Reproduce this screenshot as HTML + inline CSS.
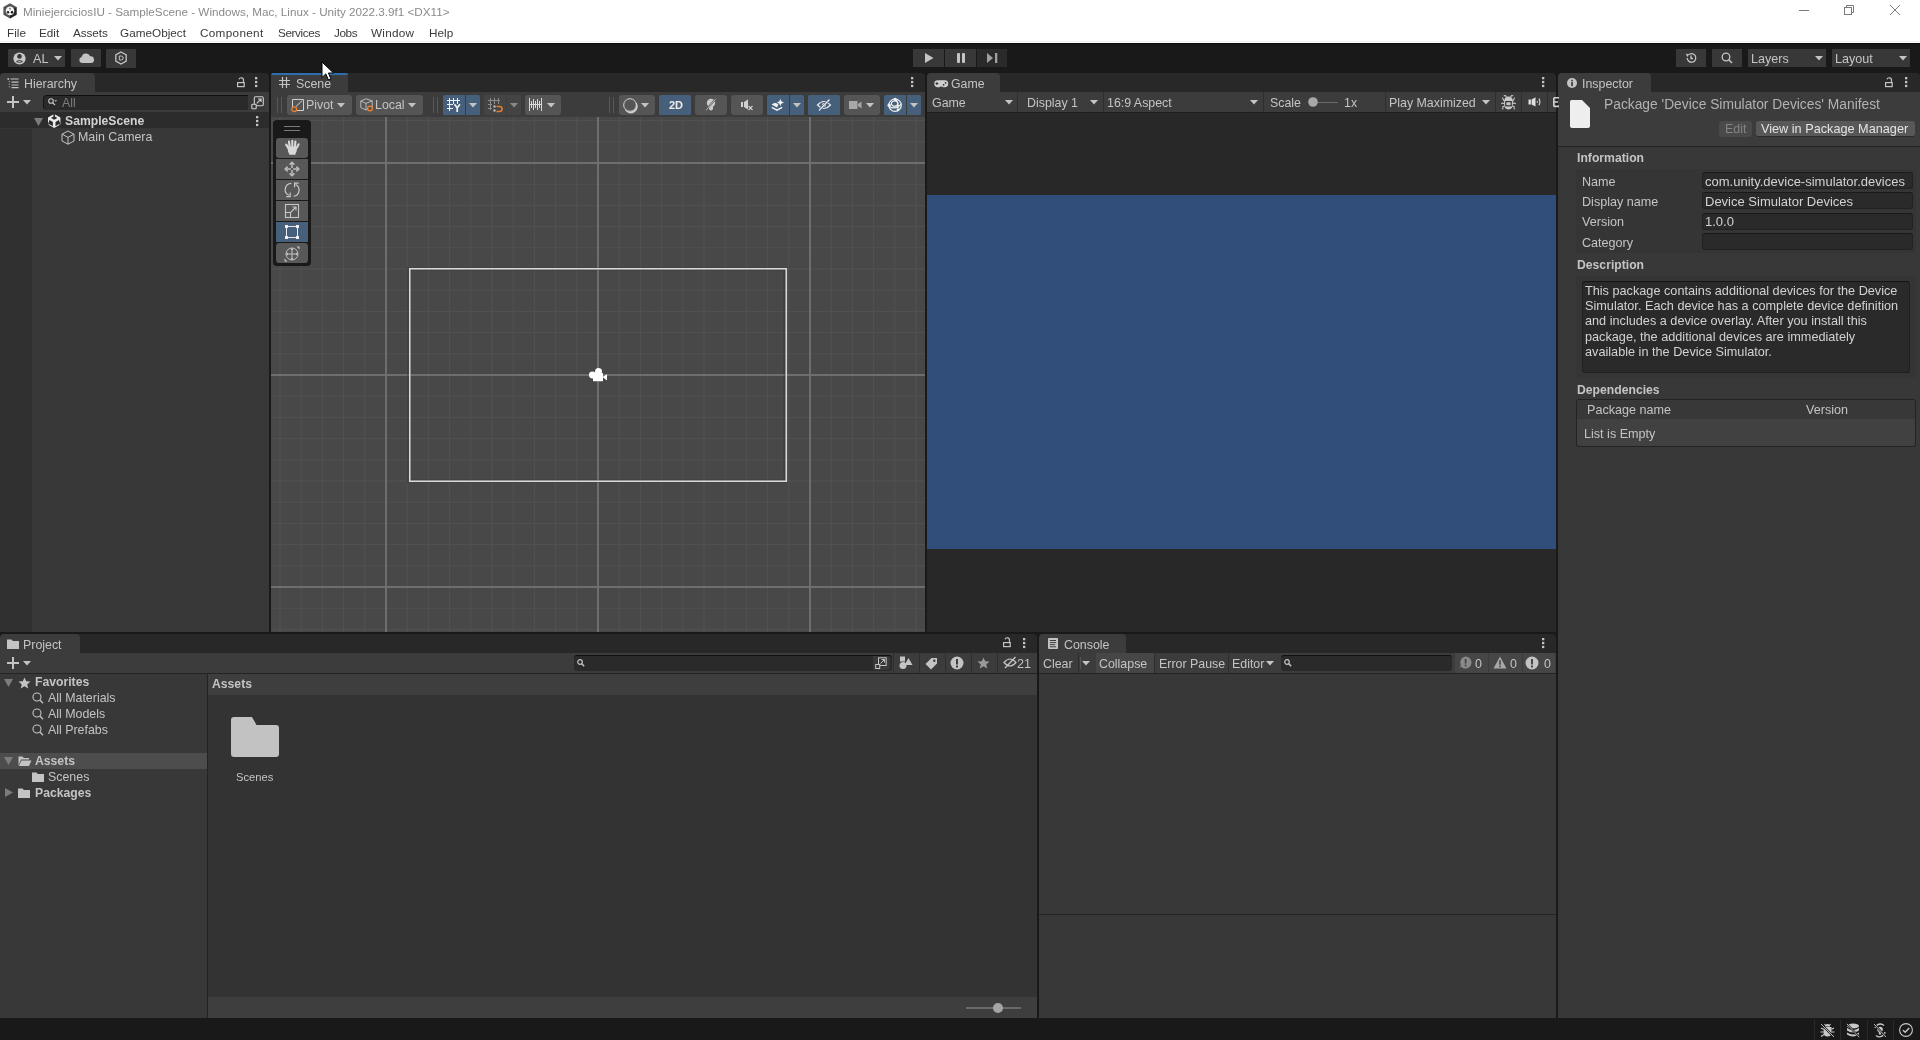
<!DOCTYPE html><html><head><meta charset="utf-8"><style>
*{box-sizing:border-box;margin:0;padding:0}
html,body{width:1920px;height:1040px;overflow:hidden;background:#191919;font-family:"Liberation Sans",sans-serif;font-size:12px;color:#c4c4c4}
.a{position:absolute}
.t{position:absolute;white-space:nowrap;line-height:16px;height:16px;will-change:transform}
svg{position:absolute;overflow:visible}
</style></head><body>
<div class="a" style="left:0px;top:0px;width:1920px;height:43px;background:#ffffff;"></div>
<div class="a" style="left:0px;top:41px;width:1920px;height:1px;background:#efefef;"></div>
<div class="a" style="left:0px;top:43px;width:1920px;height:1px;background:#0a0a0a;"></div>
<svg style="left:3px;top:3px;" width="15" height="16" viewBox="0 0 15 16"><path d="M7 0.3 L13.6 4 V11.8 L7 15.5 L0.4 11.8 V4Z" fill="#555555"/><path d="M7 15.5 L13.6 11.8 V4 L7 7.8Z" fill="#111111" opacity="0.7"/><circle cx="7" cy="7.9" r="4.3" fill="#f4f4f4"/><circle cx="7" cy="5.7" r="1" fill="#888888"/><circle cx="5" cy="9.2" r="1.2" fill="#222222"/><circle cx="9" cy="9.2" r="1.2" fill="#111111"/></svg>
<div class="t" style="left:23px;top:4.13px;font-size:11.7px;color:#8a8a8a;">MiniejerciciosIU - SampleScene - Windows, Mac, Linux - Unity 2022.3.9f1 &lt;DX11&gt;</div>
<div class="t" style="left:7px;top:25.12px;font-size:11.75px;color:#3a3a3a;letter-spacing:0px">File</div>
<div class="t" style="left:39px;top:25.12px;font-size:11.75px;color:#3a3a3a;letter-spacing:0px">Edit</div>
<div class="t" style="left:73px;top:25.12px;font-size:11.75px;color:#3a3a3a;letter-spacing:-0.1px">Assets</div>
<div class="t" style="left:120px;top:25.12px;font-size:11.75px;color:#3a3a3a;letter-spacing:0px">GameObject</div>
<div class="t" style="left:200px;top:25.12px;font-size:11.75px;color:#3a3a3a;letter-spacing:0.3px">Component</div>
<div class="t" style="left:278px;top:25.12px;font-size:11.75px;color:#3a3a3a;letter-spacing:-0.4px">Services</div>
<div class="t" style="left:334px;top:25.12px;font-size:11.75px;color:#3a3a3a;letter-spacing:-0.4px">Jobs</div>
<div class="t" style="left:371px;top:25.12px;font-size:11.75px;color:#3a3a3a;letter-spacing:0.25px">Window</div>
<div class="t" style="left:429px;top:25.12px;font-size:11.75px;color:#3a3a3a;letter-spacing:0px">Help</div>
<svg style="left:1799px;top:10px;" width="11" height="1" viewBox="0 0 11 1"><rect x="0" y="0" width="10" height="1" fill="#7a7a7a"/></svg>
<svg style="left:1843px;top:4px;" width="12" height="12" viewBox="0 0 12 12"><rect x="1.5" y="3.5" width="7" height="7" fill="none" stroke="#7a7a7a"/><path d="M3.5 3.5 V1.5 H10.5 V8.5 H8.5" fill="none" stroke="#7a7a7a"/></svg>
<svg style="left:1889px;top:4px;" width="12" height="12" viewBox="0 0 12 12"><path d="M1 1 L11 11 M11 1 L1 11" stroke="#7a7a7a" stroke-width="1"/></svg>
<div class="a" style="left:0px;top:44px;width:1920px;height:29px;background:#191919;"></div>
<div class="a" style="left:8px;top:49px;width:57px;height:18px;background:#383838;border-radius:1px"></div>
<svg style="left:12.5px;top:51.5px;" width="13" height="13" viewBox="0 0 13 13"><circle cx="6.5" cy="6.5" r="6.1" fill="#c8c8c8"/><circle cx="6.5" cy="4.4" r="2.3" fill="#383838"/><path d="M2.8 9.6 Q6.5 6.6 10.2 9.6 Q6.5 12 2.8 9.6Z" fill="#383838"/><path d="M4.3 9.4 Q6.5 8.2 8.7 9.4 Q6.5 10.3 4.3 9.4Z" fill="#c8c8c8"/></svg>
<div class="t" style="left:33px;top:50.84px;font-size:12.6px;color:#c4c4c4;">AL</div>
<svg style="left:54px;top:56px;" width="8" height="5.5" viewBox="0 0 8 5.5"><path d="M0 0 L8 0 L4.0 4.5Z" fill="#c4c4c4"/></svg>
<div class="a" style="left:71px;top:49px;width:30px;height:18px;background:#383838;border-radius:1px"></div>
<svg style="left:79px;top:52.5px;" width="15" height="10.5" viewBox="0 0 15 10.5"><path d="M3 10 A3 3 0 0 1 2.6 4.1 A4.5 4.5 0 0 1 11.2 3.2 A3.4 3.4 0 0 1 12 10Z" fill="#c4c4c4"/></svg>
<div class="a" style="left:106px;top:49px;width:30px;height:19px;background:#383838;border-radius:1px"></div>
<svg style="left:114px;top:51px;" width="14" height="14" viewBox="0 0 14 14"><path d="M7 1 L12.2 4 L12.2 10 L7 13 L1.8 10 L1.8 4Z" fill="none" stroke="#c4c4c4" stroke-width="1.3"/><path d="M5.3 5 H7.2 A2 2 0 0 1 7.2 9 H5.3Z" fill="none" stroke="#c4c4c4" stroke-width="1"/></svg>
<div class="a" style="left:913px;top:49px;width:31px;height:18px;background:#383838;"></div>
<svg style="left:925px;top:53px;" width="9" height="10" viewBox="0 0 9 10"><path d="M0 0 L8.5 5 L0 10Z" fill="#c4c4c4"/></svg>
<div class="a" style="left:945px;top:49px;width:31px;height:18px;background:#383838;"></div>
<svg style="left:957px;top:53px;" width="9" height="10" viewBox="0 0 9 10"><rect x="0" y="0" width="3" height="10" rx="1" fill="#c4c4c4"/><rect x="5" y="0" width="3" height="10" rx="1" fill="#c4c4c4"/></svg>
<div class="a" style="left:977px;top:49px;width:30px;height:18px;background:#2a2a2a;"></div>
<svg style="left:987px;top:53px;" width="11" height="10" viewBox="0 0 11 10"><path d="M0 0 L6 5 L0 10Z" fill="#a0a0a0"/><rect x="8" y="0" width="2.3" height="10" fill="#a0a0a0"/></svg>
<div class="a" style="left:1676px;top:49px;width:30px;height:18px;background:#383838;"></div>
<svg style="left:1685px;top:52px;" width="12" height="12" viewBox="0 0 12 12"><path d="M2.2 6 A4.3 4.3 0 1 0 3.4 2.9" fill="none" stroke="#c4c4c4" stroke-width="1.3"/><path d="M0.8 1.5 L3.8 2.6 L2.2 5.2Z" fill="#c4c4c4"/><path d="M6 3.5 V6.5 H8" fill="none" stroke="#c4c4c4" stroke-width="1.3"/></svg>
<div class="a" style="left:1712px;top:49px;width:30px;height:18px;background:#383838;"></div>
<svg style="left:1721px;top:52px;" width="12" height="12" viewBox="0 0 12 12"><circle cx="5" cy="5" r="3.8" fill="none" stroke="#c4c4c4" stroke-width="1.3"/><path d="M7.8 7.8 L11 11" stroke="#c4c4c4" stroke-width="1.6"/></svg>
<div class="a" style="left:1748px;top:49px;width:78px;height:18px;background:#383838;"></div>
<div class="t" style="left:1751px;top:50.84px;font-size:12.6px;color:#c4c4c4;">Layers</div>
<svg style="left:1815px;top:56px;" width="8" height="5.5" viewBox="0 0 8 5.5"><path d="M0 0 L8 0 L4.0 4.5Z" fill="#c4c4c4"/></svg>
<div class="a" style="left:1832px;top:49px;width:78px;height:18px;background:#383838;"></div>
<div class="t" style="left:1835px;top:50.84px;font-size:12.6px;color:#c4c4c4;">Layout</div>
<svg style="left:1899px;top:56px;" width="8" height="5.5" viewBox="0 0 8 5.5"><path d="M0 0 L8 0 L4.0 4.5Z" fill="#c4c4c4"/></svg>
<div class="a" style="left:0px;top:73px;width:269px;height:19px;background:#282828;border-radius:4px 4px 0 0"></div>
<div class="a" style="left:0px;top:73px;width:95px;height:19px;background:#3c3c3c;border-radius:4px 4px 0 0"></div>
<div class="a" style="left:0px;top:92px;width:269px;height:20px;background:#3c3c3c;"></div>
<div class="a" style="left:0px;top:112px;width:269px;height:520px;background:#383838;"></div>
<div class="a" style="left:271px;top:73px;width:654px;height:19px;background:#282828;border-radius:4px 4px 0 0"></div>
<div class="a" style="left:271px;top:73px;width:77px;height:19px;background:#3c3c3c;border-radius:4px 4px 0 0"></div>
<div class="a" style="left:271px;top:73px;width:77px;height:2px;background:#2f6eae;border-radius:3px 3px 0 0"></div>
<div class="a" style="left:271px;top:92px;width:654px;height:25px;background:#3c3c3c;"></div>
<div class="a" style="left:271px;top:117px;width:654px;height:515px;background:#484848;"></div>
<div class="a" style="left:927px;top:73px;width:629px;height:19px;background:#282828;border-radius:4px 4px 0 0"></div>
<div class="a" style="left:927px;top:73px;width:73px;height:19px;background:#3c3c3c;border-radius:4px 4px 0 0"></div>
<div class="a" style="left:927px;top:92px;width:629px;height:20px;background:#3c3c3c;"></div>
<div class="a" style="left:927px;top:112px;width:629px;height:1px;background:#1e1e1e;"></div>
<div class="a" style="left:927px;top:113px;width:629px;height:519px;background:#282828;"></div>
<div class="a" style="left:927px;top:195px;width:629px;height:354px;background:#314d79;"></div>
<div class="a" style="left:1558px;top:73px;width:362px;height:19px;background:#282828;border-radius:4px 4px 0 0"></div>
<div class="a" style="left:1558px;top:73px;width:93px;height:19px;background:#3c3c3c;border-radius:4px 4px 0 0"></div>
<div class="a" style="left:1558px;top:92px;width:362px;height:54px;background:#3c3c3c;"></div>
<div class="a" style="left:1558px;top:146px;width:362px;height:1px;background:#232323;"></div>
<div class="a" style="left:1558px;top:147px;width:362px;height:871px;background:#383838;"></div>
<div class="a" style="left:0px;top:634px;width:1037px;height:19px;background:#282828;border-radius:4px 4px 0 0"></div>
<div class="a" style="left:0px;top:634px;width:80px;height:19px;background:#3c3c3c;border-radius:4px 4px 0 0"></div>
<div class="a" style="left:0px;top:653px;width:1037px;height:20px;background:#3c3c3c;"></div>
<div class="a" style="left:0px;top:673px;width:1037px;height:1px;background:#232323;"></div>
<div class="a" style="left:0px;top:674px;width:207px;height:344px;background:#383838;"></div>
<div class="a" style="left:207px;top:674px;width:1px;height:344px;background:#232323;"></div>
<div class="a" style="left:208px;top:674px;width:829px;height:21px;background:#3e3e3e;"></div>
<div class="a" style="left:208px;top:695px;width:829px;height:302px;background:#333333;"></div>
<div class="a" style="left:208px;top:997px;width:829px;height:21px;background:#3e3e3e;"></div>
<div class="a" style="left:1039px;top:634px;width:517px;height:19px;background:#282828;border-radius:4px 4px 0 0"></div>
<div class="a" style="left:1039px;top:634px;width:87px;height:19px;background:#3c3c3c;border-radius:4px 4px 0 0"></div>
<div class="a" style="left:1039px;top:653px;width:517px;height:20px;background:#3c3c3c;"></div>
<div class="a" style="left:1039px;top:673px;width:517px;height:1px;background:#232323;"></div>
<div class="a" style="left:1039px;top:674px;width:517px;height:344px;background:#383838;"></div>
<div class="a" style="left:1039px;top:914px;width:517px;height:1px;background:#232323;"></div>
<div class="a" style="left:0px;top:1018px;width:1920px;height:22px;background:#191919;"></div>
<svg style="left:7px;top:78px;" width="12" height="10" viewBox="0 0 12 10"><path d="M3.5 1 H11.5 M4.5 4.2 H11.5 M4.5 7 H11.5 M4.5 9.6 H11.5" stroke="#c4c4c4" stroke-width="1.2"/><circle cx="1.2" cy="1" r="0.9" fill="#c4c4c4"/><path d="M2.3 3 V9.6" stroke="#c4c4c4" stroke-width="0.8" stroke-dasharray="1.2 1.4"/></svg>
<div class="t" style="left:23.7px;top:75.90px;font-size:12.4px;color:#c4c4c4;">Hierarchy</div>
<svg style="left:236px;top:78px;" width="10" height="10" viewBox="0 0 10 10"><path d="M7.5 4.6 V2.2 A2.3 2.3 0 0 0 3 1.4" fill="none" stroke="#c4c4c4" stroke-width="1.2"/><rect x="1.6" y="4.6" width="6.6" height="4" fill="none" stroke="#c4c4c4" stroke-width="1.2"/></svg>
<svg style="left:255px;top:77px;" width="3" height="12" viewBox="0 0 3 12"><rect x="0" y="0" width="2.3" height="2.3" fill="#c4c4c4"/><rect x="0" y="3.9" width="2.3" height="2.3" fill="#c4c4c4"/><rect x="0" y="7.8" width="2.3" height="2.3" fill="#c4c4c4"/></svg>
<svg style="left:279px;top:77px;" width="11" height="11" viewBox="0 0 11 11"><path d="M3.5 0 V11 M7.5 0 V11 M0 3.5 H11 M0 7.5 H11" stroke="#c4c4c4" stroke-width="1.2"/></svg>
<div class="t" style="left:295.7px;top:75.90px;font-size:12.4px;color:#c4c4c4;">Scene</div>
<svg style="left:911px;top:77px;" width="3" height="12" viewBox="0 0 3 12"><rect x="0" y="0" width="2.3" height="2.3" fill="#c4c4c4"/><rect x="0" y="3.9" width="2.3" height="2.3" fill="#c4c4c4"/><rect x="0" y="7.8" width="2.3" height="2.3" fill="#c4c4c4"/></svg>
<svg style="left:933.8px;top:79.8px;" width="15" height="8" viewBox="0 0 15 8"><rect x="0.3" y="0.3" width="13.9" height="6.9" rx="3.45" fill="#cfcfcf"/><ellipse cx="7.2" cy="7.4" rx="1.8" ry="0.9" fill="#3c3c3c"/><path d="M2.9 2.2 V5 M1.5 3.6 H4.3" stroke="#2a2a2a" stroke-width="1"/><circle cx="9.6" cy="4.8" r="0.85" fill="#2a2a2a"/><circle cx="11.6" cy="2.8" r="0.85" fill="#2a2a2a"/></svg>
<div class="t" style="left:950.8px;top:75.93px;font-size:12.3px;color:#c4c4c4;">Game</div>
<svg style="left:1542px;top:77px;" width="3" height="12" viewBox="0 0 3 12"><rect x="0" y="0" width="2.3" height="2.3" fill="#c4c4c4"/><rect x="0" y="3.9" width="2.3" height="2.3" fill="#c4c4c4"/><rect x="0" y="7.8" width="2.3" height="2.3" fill="#c4c4c4"/></svg>
<svg style="left:1567px;top:78px;" width="10" height="10" viewBox="0 0 10 10"><circle cx="5" cy="5" r="5" fill="#c4c4c4"/><rect x="4.2" y="4" width="1.7" height="4.2" fill="#3c3c3c"/><rect x="4.2" y="1.8" width="1.7" height="1.5" fill="#3c3c3c"/></svg>
<div class="t" style="left:1582.3px;top:75.90px;font-size:12.4px;color:#c4c4c4;">Inspector</div>
<svg style="left:1884px;top:78px;" width="10" height="10" viewBox="0 0 10 10"><path d="M7.5 4.6 V2.2 A2.3 2.3 0 0 0 3 1.4" fill="none" stroke="#c4c4c4" stroke-width="1.2"/><rect x="1.6" y="4.6" width="6.6" height="4" fill="none" stroke="#c4c4c4" stroke-width="1.2"/></svg>
<svg style="left:1905px;top:77px;" width="3" height="12" viewBox="0 0 3 12"><rect x="0" y="0" width="2.3" height="2.3" fill="#c4c4c4"/><rect x="0" y="3.9" width="2.3" height="2.3" fill="#c4c4c4"/><rect x="0" y="7.8" width="2.3" height="2.3" fill="#c4c4c4"/></svg>
<svg style="left:7px;top:639px;" width="12" height="10" viewBox="0 0 12 10"><path d="M0 0.5 H4.5 L5.8 2 H12 V10 H0Z" fill="#c4c4c4"/></svg>
<div class="t" style="left:23.3px;top:636.90px;font-size:12.4px;color:#c4c4c4;">Project</div>
<svg style="left:1002px;top:638px;" width="10" height="10" viewBox="0 0 10 10"><path d="M7.5 4.6 V2.2 A2.3 2.3 0 0 0 3 1.4" fill="none" stroke="#c4c4c4" stroke-width="1.2"/><rect x="1.6" y="4.6" width="6.6" height="4" fill="none" stroke="#c4c4c4" stroke-width="1.2"/></svg>
<svg style="left:1023px;top:638px;" width="3" height="12" viewBox="0 0 3 12"><rect x="0" y="0" width="2.3" height="2.3" fill="#c4c4c4"/><rect x="0" y="3.9" width="2.3" height="2.3" fill="#c4c4c4"/><rect x="0" y="7.8" width="2.3" height="2.3" fill="#c4c4c4"/></svg>
<svg style="left:1048px;top:638px;" width="10" height="11" viewBox="0 0 10 11"><rect x="0" y="0" width="10" height="11" rx="1" fill="#c4c4c4"/><path d="M1.8 2.5 H8 M1.8 4.6 H8.2 M1.8 6.7 H7.2 M1.8 8.8 H8.2" stroke="#3c3c3c" stroke-width="1"/></svg>
<div class="t" style="left:1063.7px;top:636.90px;font-size:12.4px;color:#c4c4c4;">Console</div>
<svg style="left:1542px;top:638px;" width="3" height="12" viewBox="0 0 3 12"><rect x="0" y="0" width="2.3" height="2.3" fill="#c4c4c4"/><rect x="0" y="3.9" width="2.3" height="2.3" fill="#c4c4c4"/><rect x="0" y="7.8" width="2.3" height="2.3" fill="#c4c4c4"/></svg>
<svg style="left:7px;top:96px;" width="12" height="12" viewBox="0 0 12 12"><path d="M6 0 V12 M0 6 H12" stroke="#c4c4c4" stroke-width="2"/></svg>
<svg style="left:23px;top:100px;" width="8" height="5.5" viewBox="0 0 8 5.5"><path d="M0 0 L8 0 L4.0 4.5Z" fill="#c4c4c4"/></svg>
<div class="a" style="left:43px;top:94.5px;width:205px;height:15px;background:#2a2a2a;border-radius:4px 0 0 4px;border-top:1px solid #0f0f0f;border-left:1px solid #151515"></div>
<div class="a" style="left:248px;top:94.5px;width:17px;height:15px;background:#383838;border-radius:0 4px 4px 0"></div>
<svg style="left:48px;top:98px;" width="11" height="9" viewBox="0 0 11 9"><circle cx="3" cy="3" r="2.3" fill="none" stroke="#c4c4c4" stroke-width="1.1"/><path d="M4.6 4.6 L7 7" stroke="#c4c4c4" stroke-width="1.2"/><path d="M6.2 2.2 H9.2 L7.7 3.8Z" fill="#c4c4c4"/></svg>
<div class="t" style="left:62px;top:94.90px;font-size:12.4px;color:#7d7d7d;">All</div>
<svg style="left:250.5px;top:95.5px;" width="14" height="14" viewBox="0 0 14 14"><rect x="3.3" y="0.8" width="9" height="9" rx="1.2" fill="none" stroke="#d0d0d0" stroke-width="1.1"/><rect x="0.8" y="8.3" width="4.4" height="4.4" rx="0.8" fill="#383838" stroke="#d0d0d0" stroke-width="1.1"/><path d="M5.8 7.3 L10 3.1 M7 3 H10.1 V6.1" fill="none" stroke="#d0d0d0" stroke-width="1.1"/></svg>
<div class="a" style="left:0px;top:112px;width:269px;height:16px;background:#2c2c2c;"></div>
<div class="a" style="left:0px;top:128px;width:269px;height:1px;background:#363636;"></div>
<div class="a" style="left:0px;top:129px;width:32px;height:503px;background:#303030;"></div>
<svg style="left:34px;top:118px;" width="9" height="8" viewBox="0 0 9 8"><path d="M0 0 H9 L4.5 8Z" fill="#7c7c7c"/></svg>
<svg style="left:47.8px;top:113.8px;" width="13" height="15" viewBox="0 0 13 15"><path d="M6.2 0 L12.4 3.5 V10.5 L6.2 14 L0 10.5 V3.5Z" fill="#ececec"/><path d="M6.2 1.9 L9.4 3.9 L6.2 5.7 L3 3.9Z M5.4 -0.5 H7 V2.8 H5.4Z" fill="#2c2c2c"/><path d="M1.5 6.1 L4.9 8.1 V12.3 L1.5 10.3 L0.2 11 V9.6Z" fill="#2c2c2c"/><path d="M10.9 6.1 L7.5 8.1 V12.3 L10.9 10.3 L12.2 11 V9.6Z" fill="#2c2c2c"/></svg>
<div class="t" style="left:65px;top:112.97px;font-size:12.2px;color:#d2d2d2;font-weight:bold;">SampleScene</div>
<svg style="left:256px;top:116px;" width="3" height="12" viewBox="0 0 3 12"><rect x="0" y="0" width="2.3" height="2.3" fill="#c4c4c4"/><rect x="0" y="3.9" width="2.3" height="2.3" fill="#c4c4c4"/><rect x="0" y="7.8" width="2.3" height="2.3" fill="#c4c4c4"/></svg>
<svg style="left:61px;top:129.5px;" width="14" height="15" viewBox="0 0 14 15"><path d="M7 1 L13 4.2 V11 L7 14.2 L1 11 V4.2Z M1 4.2 L7 7.4 L13 4.2 M7 7.4 V14.2" fill="none" stroke="#c4c4c4" stroke-width="1"/></svg>
<div class="t" style="left:78px;top:128.90px;font-size:12.4px;color:#c4c4c4;">Main Camera</div>
<svg style="left:271px;top:117px;" width="654" height="515" viewBox="0 0 654 515"><rect x="8.50" y="0" width="1" height="515" fill="#525252"/><rect x="29.70" y="0" width="1" height="515" fill="#525252"/><rect x="50.90" y="0" width="1" height="515" fill="#525252"/><rect x="72.10" y="0" width="1" height="515" fill="#525252"/><rect x="93.30" y="0" width="1" height="515" fill="#525252"/><rect x="135.70" y="0" width="1" height="515" fill="#525252"/><rect x="156.90" y="0" width="1" height="515" fill="#525252"/><rect x="178.10" y="0" width="1" height="515" fill="#525252"/><rect x="199.30" y="0" width="1" height="515" fill="#525252"/><rect x="220.50" y="0" width="1" height="515" fill="#525252"/><rect x="241.70" y="0" width="1" height="515" fill="#525252"/><rect x="262.90" y="0" width="1" height="515" fill="#525252"/><rect x="284.10" y="0" width="1" height="515" fill="#525252"/><rect x="305.30" y="0" width="1" height="515" fill="#525252"/><rect x="347.70" y="0" width="1" height="515" fill="#525252"/><rect x="368.90" y="0" width="1" height="515" fill="#525252"/><rect x="390.10" y="0" width="1" height="515" fill="#525252"/><rect x="411.30" y="0" width="1" height="515" fill="#525252"/><rect x="432.50" y="0" width="1" height="515" fill="#525252"/><rect x="453.70" y="0" width="1" height="515" fill="#525252"/><rect x="474.90" y="0" width="1" height="515" fill="#525252"/><rect x="496.10" y="0" width="1" height="515" fill="#525252"/><rect x="517.30" y="0" width="1" height="515" fill="#525252"/><rect x="559.70" y="0" width="1" height="515" fill="#525252"/><rect x="580.90" y="0" width="1" height="515" fill="#525252"/><rect x="602.10" y="0" width="1" height="515" fill="#525252"/><rect x="623.30" y="0" width="1" height="515" fill="#525252"/><rect x="644.50" y="0" width="1" height="515" fill="#525252"/><rect x="0" y="3.10" width="654" height="1" fill="#525252"/><rect x="0" y="24.30" width="654" height="1" fill="#525252"/><rect x="0" y="66.70" width="654" height="1" fill="#525252"/><rect x="0" y="87.90" width="654" height="1" fill="#525252"/><rect x="0" y="109.10" width="654" height="1" fill="#525252"/><rect x="0" y="130.30" width="654" height="1" fill="#525252"/><rect x="0" y="151.50" width="654" height="1" fill="#525252"/><rect x="0" y="172.70" width="654" height="1" fill="#525252"/><rect x="0" y="193.90" width="654" height="1" fill="#525252"/><rect x="0" y="215.10" width="654" height="1" fill="#525252"/><rect x="0" y="236.30" width="654" height="1" fill="#525252"/><rect x="0" y="278.70" width="654" height="1" fill="#525252"/><rect x="0" y="299.90" width="654" height="1" fill="#525252"/><rect x="0" y="321.10" width="654" height="1" fill="#525252"/><rect x="0" y="342.30" width="654" height="1" fill="#525252"/><rect x="0" y="363.50" width="654" height="1" fill="#525252"/><rect x="0" y="384.70" width="654" height="1" fill="#525252"/><rect x="0" y="405.90" width="654" height="1" fill="#525252"/><rect x="0" y="427.10" width="654" height="1" fill="#525252"/><rect x="0" y="448.30" width="654" height="1" fill="#525252"/><rect x="0" y="490.70" width="654" height="1" fill="#525252"/><rect x="0" y="511.90" width="654" height="1" fill="#525252"/><rect x="114" y="0" width="2" height="515" fill="#6e6e6e"/><rect x="326" y="0" width="2" height="515" fill="#6e6e6e"/><rect x="538" y="0" width="2" height="515" fill="#6e6e6e"/><rect x="0" y="45" width="654" height="2" fill="#6e6e6e"/><rect x="0" y="257" width="654" height="2" fill="#6e6e6e"/><rect x="0" y="469" width="654" height="2" fill="#6e6e6e"/><rect x="137.75" y="151.75" width="376.5" height="212.5" fill="none" stroke="#2a2a2a" stroke-width="3.5" opacity="0.35"/><rect x="138.75" y="151.75" width="376.5" height="212.5" fill="none" stroke="#d9d9d9" stroke-width="1.6"/></svg>
<svg style="left:588px;top:367px;" width="20" height="16" viewBox="0 0 20 16"><g fill="#ffffff"><circle cx="4.4" cy="8" r="3.4"/><circle cx="10.5" cy="4.4" r="3.5"/><rect x="5" y="6" width="10" height="8.2" rx="0.6"/><path d="M14.5 10 L19 7.2 V13.4Z"/></g></svg>
<div class="a" style="left:277px;top:97px;width:1px;height:16px;background:#585858;"></div>
<div class="a" style="left:281px;top:97px;width:1px;height:16px;background:#585858;"></div>
<div class="a" style="left:433px;top:97px;width:1px;height:16px;background:#585858;"></div>
<div class="a" style="left:437px;top:97px;width:1px;height:16px;background:#585858;"></div>
<div class="a" style="left:609px;top:97px;width:1px;height:16px;background:#585858;"></div>
<div class="a" style="left:613px;top:97px;width:1px;height:16px;background:#585858;"></div>
<div class="a" style="left:287px;top:95px;width:65px;height:20px;background:#555555;border-radius:3px"></div>
<svg style="left:291px;top:98px;" width="14" height="14" viewBox="0 0 14 14"><path d="M1.5 10 V1.5 H12.5 V12.5 H5" fill="none" stroke="#d0d0d0" stroke-width="1"/><path d="M4.8 8.7 L11.2 2.6" stroke="#d0d0d0" stroke-width="1"/><circle cx="3.2" cy="11.2" r="2.4" fill="none" stroke="#f07f2a" stroke-width="1.3"/></svg>
<div class="t" style="left:306px;top:97.40px;font-size:12.4px;color:#c4c4c4;">Pivot</div>
<svg style="left:337px;top:103px;" width="8" height="5.5" viewBox="0 0 8 5.5"><path d="M0 0 L8 0 L4.0 4.5Z" fill="#c4c4c4"/></svg>
<div class="a" style="left:356px;top:95px;width:67px;height:20px;background:#555555;border-radius:3px"></div>
<svg style="left:360px;top:98px;" width="14" height="14" viewBox="0 0 14 14"><path d="M6 0.8 L12.2 2.8 V9 L6 12 L0.8 9.6 V3Z M0.8 3 L6 5.4 L12.2 2.8 M6 5.4 V12" fill="none" stroke="#c4c4c4" stroke-width="0.9"/><circle cx="10" cy="10.5" r="2.4" fill="#555555" stroke="#f07f2a" stroke-width="1.3"/></svg>
<div class="t" style="left:375px;top:97.40px;font-size:12.4px;color:#c4c4c4;">Local</div>
<svg style="left:408px;top:103px;" width="8" height="5.5" viewBox="0 0 8 5.5"><path d="M0 0 L8 0 L4.0 4.5Z" fill="#c4c4c4"/></svg>
<div class="a" style="left:443px;top:95px;width:22px;height:20px;background:#46607c;border-radius:1.5px 0 0 1.5px"></div>
<div class="a" style="left:466px;top:95px;width:14px;height:20px;background:#46607c;border-radius:0 1.5px 1.5px 0"></div>
<svg style="left:440px;top:93px;" width="25" height="22" viewBox="0 0 25 22"><g stroke="#f0f0f0" stroke-width="1"><path d="M9.5 5 V18 M13.5 5 V11 M17.5 5 V11 M7 7.5 H20 M7 11.5 H13 M7 15.5 H13"/></g><path d="M14.5 11.3 L17.2 14.8 L19.9 11.3 M17.2 14.8 V19" fill="none" stroke="#f0f0f0" stroke-width="1.7"/></svg>
<svg style="left:469px;top:103px;" width="8" height="5.5" viewBox="0 0 8 5.5"><path d="M0 0 L8 0 L4.0 4.5Z" fill="#c4c4c4"/></svg>
<div class="a" style="left:484px;top:95px;width:22px;height:20px;background:#444444;border-radius:2px 0 0 2px"></div>
<div class="a" style="left:507px;top:95px;width:14px;height:20px;background:#444444;border-radius:0 2px 2px 0"></div>
<svg style="left:480px;top:93px;" width="25" height="22" viewBox="0 0 25 22"><g stroke="#8c8c8c" stroke-width="1"><path d="M10.5 5 V17 M14.5 5 V11 M18.5 5 V11 M8 7.5 H20 M8 11.5 H12 M8 15.5 H12"/></g><rect x="13.5" y="12.5" width="2" height="2" fill="#d0d0d0"/><rect x="13.5" y="16.5" width="2" height="2" fill="#d0d0d0"/><path d="M16.5 13.5 H19.5 A2.5 2.5 0 0 1 19.5 18.5 H16.5" fill="none" stroke="#e07b30" stroke-width="1.6"/></svg>
<svg style="left:510px;top:103px;" width="8" height="5.5" viewBox="0 0 8 5.5"><path d="M0 0 L8 0 L4.0 4.5Z" fill="#8a8a8a"/></svg>
<div class="a" style="left:525px;top:95px;width:36px;height:20px;background:#555555;border-radius:3px"></div>
<svg style="left:525px;top:93px;" width="25" height="22" viewBox="0 0 25 22"><g stroke="#d8d8d8" stroke-width="1"><path d="M4.5 5 V18 M16.5 5 V18 M8.5 6 V17 M12.5 6 V17 M6.5 8 V15 M10.5 8 V15 M14.5 8 V15 M4.5 11.5 H16.5"/></g></svg>
<svg style="left:547px;top:103px;" width="8" height="5.5" viewBox="0 0 8 5.5"><path d="M0 0 L8 0 L4.0 4.5Z" fill="#c4c4c4"/></svg>
<div class="a" style="left:619px;top:95px;width:36px;height:20px;background:#555555;border-radius:3px"></div>
<svg style="left:623px;top:98px;" width="14" height="14" viewBox="0 0 14 14"><circle cx="7" cy="7" r="6.3" fill="none" stroke="#d4d4d4" stroke-width="1"/><path d="M13.2 5 A6.6 6.6 0 0 1 2.6 12.2 A6.2 6.2 0 0 0 13.2 5Z" fill="#d4d4d4" stroke="#d4d4d4" stroke-width="0.8"/></svg>
<svg style="left:641px;top:103px;" width="8" height="5.5" viewBox="0 0 8 5.5"><path d="M0 0 L8 0 L4.0 4.5Z" fill="#c4c4c4"/></svg>
<div class="a" style="left:659px;top:95px;width:32px;height:20px;background:#46607c;border-radius:1.5px"></div>
<div class="t" style="left:668.8px;top:97.36px;font-size:11px;color:#eeeeee;font-weight:bold;letter-spacing:-0.2px">2D</div>
<div class="a" style="left:695px;top:95px;width:32px;height:20px;background:#555555;border-radius:3px"></div>
<svg style="left:705px;top:98px;" width="12" height="14" viewBox="0 0 12 14"><circle cx="6" cy="5" r="4.2" fill="#c8c8c8"/><path d="M4 9 H8 V10.5 A2 2 0 0 1 4 10.5Z" fill="#c8c8c8"/><path d="M0.5 12.5 L11 0.5" stroke="#555555" stroke-width="1.8"/><path d="M1 12.3 L10.8 0.8" stroke="#c8c8c8" stroke-width="0.8"/></svg>
<div class="a" style="left:731px;top:95px;width:32px;height:20px;background:#555555;border-radius:3px"></div>
<svg style="left:741px;top:99px;" width="13" height="12" viewBox="0 0 13 12"><rect x="0" y="3" width="2" height="5" fill="#d0d0d0"/><path d="M3 3 L7 0.5 V10.5 L3 8Z" fill="#d0d0d0"/><path d="M7.5 7 L11.5 11 M11.5 7 L7.5 11" stroke="#d0d0d0" stroke-width="1.1"/></svg>
<div class="a" style="left:767px;top:95px;width:22px;height:20px;background:#46607c;border-radius:1.5px 0 0 1.5px"></div>
<div class="a" style="left:790px;top:95px;width:14px;height:20px;background:#46607c;border-radius:0 1.5px 1.5px 0"></div>
<svg style="left:771px;top:98px;" width="14" height="14" viewBox="0 0 14 14"><path d="M0.8 9.3 L6 12.2 L11.2 9.3" fill="none" stroke="#f0f0f0" stroke-width="1.5"/><path d="M0.6 6.6 L3.2 5.1 Q6.5 4.8 7.4 6.6 L6 9.5Z" fill="#f0f0f0"/><path d="M9.4 0.6 Q9.8 3.9 13.2 4.5 Q9.8 5.1 9.4 8.4 Q9 5.1 5.6 4.5 Q9 3.9 9.4 0.6Z" fill="#f0f0f0"/></svg>
<svg style="left:793px;top:103px;" width="8" height="5.5" viewBox="0 0 8 5.5"><path d="M0 0 L8 0 L4.0 4.5Z" fill="#c4c4c4"/></svg>
<div class="a" style="left:808px;top:95px;width:32px;height:20px;background:#46607c;border-radius:1.5px"></div>
<svg style="left:817px;top:99px;" width="15" height="12" viewBox="0 0 15 12"><path d="M0.5 6 Q7 -1 13.5 6 Q7 13 0.5 6Z" fill="none" stroke="#e8e8e8" stroke-width="1.2"/><circle cx="7" cy="6" r="2" fill="#e8e8e8"/><path d="M2 11.5 L12.5 0.5" stroke="#46607c" stroke-width="2.4"/><path d="M2 11.5 L12.5 0.5" stroke="#e8e8e8" stroke-width="1.2"/></svg>
<div class="a" style="left:844px;top:95px;width:36px;height:20px;background:#555555;border-radius:3px"></div>
<svg style="left:849px;top:100px;" width="13" height="10" viewBox="0 0 13 10"><rect x="0" y="1" width="8.5" height="8" fill="#a8a8a8"/><path d="M9 4 L12.5 1.5 V8.5 L9 6Z" fill="#a8a8a8"/></svg>
<svg style="left:866px;top:103px;" width="8" height="5.5" viewBox="0 0 8 5.5"><path d="M0 0 L8 0 L4.0 4.5Z" fill="#c4c4c4"/></svg>
<div class="a" style="left:884px;top:95px;width:22px;height:20px;background:#46607c;border-radius:1.5px 0 0 1.5px"></div>
<div class="a" style="left:907px;top:95px;width:14px;height:20px;background:#46607c;border-radius:0 1.5px 1.5px 0"></div>
<svg style="left:888px;top:97.5px;" width="15" height="15" viewBox="0 0 15 15"><g fill="none" stroke="#f0f0f0" stroke-width="1.2"><circle cx="7.1" cy="7.2" r="6.2"/><ellipse cx="6.6" cy="5.6" rx="3.2" ry="2.6"/><path d="M1 8.2 Q7 12.5 13 6.5 M7.1 1 Q11.5 4 9.6 13"/></g><g fill="#f0f0f0"><circle cx="7.1" cy="1.4" r="1.7"/><circle cx="1.2" cy="7.2" r="1.7"/><circle cx="9.8" cy="12" r="1.2"/></g></svg>
<svg style="left:910px;top:103px;" width="8" height="5.5" viewBox="0 0 8 5.5"><path d="M0 0 L8 0 L4.0 4.5Z" fill="#c4c4c4"/></svg>
<div class="a" style="left:273px;top:120px;width:38px;height:146px;background:#191919;border-radius:4px"></div>
<div class="a" style="left:284px;top:126px;width:16px;height:1px;background:#7a7a7a;"></div>
<div class="a" style="left:284px;top:129.5px;width:16px;height:1px;background:#7a7a7a;"></div>
<div class="a" style="left:276px;top:138px;width:32px;height:20px;background:#585858;border-radius:3px"></div>
<div class="a" style="left:276px;top:159px;width:32px;height:20px;background:#585858;"></div>
<div class="a" style="left:276px;top:180px;width:32px;height:20px;background:#585858;"></div>
<div class="a" style="left:276px;top:201px;width:32px;height:20px;background:#585858;"></div>
<div class="a" style="left:276px;top:222px;width:32px;height:20px;background:#46607c;"></div>
<div class="a" style="left:276px;top:243px;width:32px;height:20px;background:#585858;border-radius:3px"></div>
<svg style="left:285px;top:140px;" width="15" height="16" viewBox="0 0 15 16"><g fill="#d8d8d8" stroke="#d8d8d8" stroke-linecap="round"><path d="M3.2 7.8 L1.2 4.6" stroke-width="2.2"/><path d="M4.6 6.5 L4 1.6" stroke-width="2.1"/><path d="M7.3 6.5 V0.9" stroke-width="2.1"/><path d="M10 6.5 L10.4 1.6" stroke-width="2.1"/><path d="M12 7.5 L13.6 4.2" stroke-width="2"/><path d="M2.5 6.5 H12.5 L11.5 11.5 L10.2 14.8 H4.5 L3 11.5Z" stroke="none"/></g></svg>
<svg style="left:284px;top:161px;" width="16" height="16" viewBox="0 0 16 16"><g fill="none" stroke="#bdbdbd" stroke-width="1.5"><path d="M8 1.5 V6.9 M8 9.1 V14.5 M1.5 8 H6.9 M9.1 8 H14.5"/><path d="M5.6 3.6 L8 1.2 L10.4 3.6 M5.6 12.4 L8 14.8 L10.4 12.4 M3.6 5.6 L1.2 8 L3.6 10.4 M12.4 5.6 L14.8 8 L12.4 10.4"/></g></svg>
<svg style="left:285px;top:182px;" width="15" height="16" viewBox="0 0 15 16"><g fill="none" stroke="#c8c8c8" stroke-width="1.2"><path d="M6.3 1.3 A6.2 6.2 0 0 0 4 13.2"/><path d="M8.7 14.2 A6.2 6.2 0 0 0 10.6 2.5"/><path d="M9.6 5.3 V1.2 H13.6"/><path d="M5.2 10.5 V14.6 H1.2"/></g></svg>
<svg style="left:285px;top:204px;" width="14" height="14" viewBox="0 0 14 14"><rect x="0.5" y="0.5" width="13" height="13" fill="none" stroke="#c4c4c4" stroke-width="1.1"/><rect x="0.5" y="8.5" width="5" height="5" fill="none" stroke="#c4c4c4" stroke-width="1.1"/><path d="M6 8 L11 3 M7.5 3 H11 V6.5" fill="none" stroke="#c4c4c4" stroke-width="1.1"/></svg>
<svg style="left:285px;top:225px;" width="14" height="14" viewBox="0 0 14 14"><path d="M1.5 1.5 V12.5 M12.5 1.5 V12.5 M1.5 1.5 H12.5 M1.5 12.5 H12.5" stroke="#e8e8e8" stroke-width="1"/><rect x="0" y="0" width="3" height="3" fill="#f0f0f0"/><rect x="11" y="0" width="3" height="3" fill="#f0f0f0"/><rect x="0" y="11" width="3" height="3" fill="#f0f0f0"/><rect x="11" y="11" width="3" height="3" fill="#f0f0f0"/></svg>
<svg style="left:284px;top:246px;" width="16" height="16" viewBox="0 0 16 16"><circle cx="8" cy="8" r="6" fill="none" stroke="#c4c4c4" stroke-width="1"/><path d="M8 2.5 V13.5 M2.5 8 H13.5" stroke="#c4c4c4" stroke-width="1"/><path d="M8 2 L6.5 4 H9.5Z M8 14 L6.5 12 H9.5Z M2 8 L4 6.5 V9.5Z M14 8 L12 6.5 V9.5Z M0.5 15.5 L0.5 12.5 L3.5 15.5Z M15.5 0.5 L15.5 3.5 L12.5 0.5Z" fill="#c4c4c4"/></svg>
<svg style="left:321px;top:61px;" width="13" height="20" viewBox="0 0 13 20"><path d="M1 1 V16.5 L4.8 12.9 L7.5 19 L10 18 L7.4 12 H12.5Z" fill="#ffffff" stroke="#000" stroke-width="1"/></svg>
<div class="a" style="left:1017px;top:92px;width:1px;height:20px;background:#2e2e2e;"></div>
<div class="a" style="left:1103px;top:92px;width:1px;height:20px;background:#2e2e2e;"></div>
<div class="a" style="left:1263px;top:92px;width:1px;height:20px;background:#2e2e2e;"></div>
<div class="a" style="left:1385px;top:92px;width:1px;height:20px;background:#2e2e2e;"></div>
<div class="a" style="left:1495px;top:92px;width:1px;height:20px;background:#2e2e2e;"></div>
<div class="a" style="left:1521px;top:92px;width:1px;height:20px;background:#2e2e2e;"></div>
<div class="a" style="left:1547px;top:92px;width:1px;height:20px;background:#2e2e2e;"></div>
<div class="t" style="left:931.5px;top:94.90px;font-size:12.4px;color:#c4c4c4;">Game</div>
<svg style="left:1005px;top:100px;" width="8" height="5.5" viewBox="0 0 8 5.5"><path d="M0 0 L8 0 L4.0 4.5Z" fill="#c4c4c4"/></svg>
<div class="t" style="left:1027px;top:94.90px;font-size:12.4px;color:#c4c4c4;">Display 1</div>
<svg style="left:1090px;top:100px;" width="8" height="5.5" viewBox="0 0 8 5.5"><path d="M0 0 L8 0 L4.0 4.5Z" fill="#c4c4c4"/></svg>
<div class="t" style="left:1107px;top:94.90px;font-size:12.4px;color:#c4c4c4;">16:9 Aspect</div>
<svg style="left:1250px;top:100px;" width="8" height="5.5" viewBox="0 0 8 5.5"><path d="M0 0 L8 0 L4.0 4.5Z" fill="#c4c4c4"/></svg>
<div class="t" style="left:1270px;top:94.90px;font-size:12.4px;color:#c4c4c4;">Scale</div>
<div class="a" style="left:1312px;top:101.5px;width:26px;height:1.5px;background:#6a6a6a;"></div>
<svg style="left:1308px;top:97px;" width="10" height="10" viewBox="0 0 10 10"><circle cx="5" cy="5" r="4.8" fill="#a8a8a8"/></svg>
<div class="t" style="left:1344px;top:94.90px;font-size:12.4px;color:#c4c4c4;">1x</div>
<div class="t" style="left:1389px;top:94.90px;font-size:12.4px;color:#c4c4c4;">Play Maximized</div>
<svg style="left:1482px;top:100px;" width="8" height="5.5" viewBox="0 0 8 5.5"><path d="M0 0 L8 0 L4.0 4.5Z" fill="#c4c4c4"/></svg>
<svg style="left:1501px;top:94.5px;" width="15" height="15" viewBox="0 0 15 15"><g fill="none" stroke="#c8c8c8" stroke-width="1.1" stroke-linecap="round"><path d="M3.2 0.8 Q4.5 0.3 5.2 1.6 M11.8 0.8 Q10.5 0.3 9.8 1.6"/><path d="M1.5 3 L3.2 6 M13.5 3 L11.8 6 M0.6 8.6 Q1.4 7.8 3 8.4 M14.4 8.6 Q13.6 7.8 12 8.4 M1.8 14 V11.8 L3.4 11 M13.2 14 V11.8 L11.6 11"/></g><path d="M7.5 1.6 Q11.8 1.6 12 7 Q12.2 14.5 7.5 14.5 Q2.8 14.5 3 7 Q3.2 1.6 7.5 1.6Z" fill="#c8c8c8"/><rect x="4.8" y="6.6" width="5.4" height="4.2" fill="none" stroke="#2e2e2e" stroke-width="1.2"/></svg>
<svg style="left:1527.5px;top:96.5px;" width="14" height="10" viewBox="0 0 14 10"><rect x="0.5" y="2.5" width="2.4" height="5" fill="#e0e0e0"/><path d="M3.6 2.5 L7.5 0.2 V9.6 L3.6 7.4Z" fill="#e0e0e0"/><circle cx="9.4" cy="4.9" r="0.8" fill="#d0d0d0"/><path d="M11 1.5 Q12.8 4.9 11 8.3" fill="none" stroke="#d0d0d0" stroke-width="1.1"/></svg>
<svg style="left:1552.5px;top:97px;" width="8" height="11" viewBox="0 0 8 11"><path d="M0.8 0.8 H6 M0.8 5 H5 M0.8 9.4 H6 M0.8 0.8 V9.4" stroke="#d0d0d0" stroke-width="1.6" fill="none"/></svg>
<svg style="left:1570px;top:100px;" width="20" height="28" viewBox="0 0 20 28"><path d="M1.5 0 H12 L20 8 V26 Q20 28 18 28 H2 Q0 28 0 26 V1.5 Q0 0 1.5 0Z" fill="#eeeeee"/></svg>
<div class="t" style="left:1604px;top:97.44px;font-size:13.8px;color:#b2b2b2;">Package 'Device Simulator Devices' Manifest</div>
<div class="a" style="left:1719px;top:121px;width:33px;height:16px;background:#4a4a4a;border-radius:3px"></div>
<div class="t" style="left:1724.5px;top:121.40px;font-size:12.4px;color:#858585;">Edit</div>
<div class="a" style="left:1756px;top:121px;width:159px;height:16px;background:#585858;border-radius:3px;border-bottom:1px solid #2a2a2a"></div>
<div class="t" style="left:1761px;top:121.30px;font-size:12.7px;color:#e4e4e4;">View in Package Manager</div>
<div class="t" style="left:1577.3px;top:150.47px;font-size:12.2px;color:#c4c4c4;font-weight:bold;">Information</div>
<div class="a" style="left:1576px;top:169px;width:340px;height:84px;background:#353535;"></div>
<div class="t" style="left:1582px;top:174.04px;font-size:12.6px;color:#c4c4c4;">Name</div>
<div class="a" style="left:1702px;top:172.2px;width:210.5px;height:17px;background:#2a2a2a;border-radius:3px;border:1px solid #212121;border-top-color:#1a1a1a"></div>
<div class="t" style="left:1705px;top:173.90px;font-size:13.0px;color:#d2d2d2;">com.unity.device-simulator.devices</div>
<div class="t" style="left:1582px;top:194.24px;font-size:12.6px;color:#c4c4c4;">Display name</div>
<div class="a" style="left:1702px;top:192.4px;width:210.5px;height:17px;background:#2a2a2a;border-radius:3px;border:1px solid #212121;border-top-color:#1a1a1a"></div>
<div class="t" style="left:1705px;top:194.10px;font-size:13.0px;color:#d2d2d2;">Device Simulator Devices</div>
<div class="t" style="left:1582px;top:214.44px;font-size:12.6px;color:#c4c4c4;">Version</div>
<div class="a" style="left:1702px;top:212.6px;width:210.5px;height:17px;background:#2a2a2a;border-radius:3px;border:1px solid #212121;border-top-color:#1a1a1a"></div>
<div class="t" style="left:1705px;top:214.30px;font-size:13.0px;color:#d2d2d2;">1.0.0</div>
<div class="t" style="left:1582px;top:234.64px;font-size:12.6px;color:#c4c4c4;">Category</div>
<div class="a" style="left:1702px;top:232.8px;width:210.5px;height:17px;background:#2a2a2a;border-radius:3px;border:1px solid #212121;border-top-color:#1a1a1a"></div>
<div class="t" style="left:1577.3px;top:256.97px;font-size:12.2px;color:#c4c4c4;font-weight:bold;">Description</div>
<div class="a" style="left:1576px;top:276px;width:340px;height:102px;background:#353535;"></div>
<div class="a" style="left:1582px;top:281px;width:328px;height:92px;background:#2a2a2a;border-radius:3px;border:1px solid #1f1f1f;border-top-color:#151515"></div>
<div class="t" style="left:1585.4px;top:283.20px;font-size:12.7px;color:#d2d2d2;">This package contains additional devices for the Device</div>
<div class="t" style="left:1585.4px;top:298.32px;font-size:12.7px;color:#d2d2d2;">Simulator. Each device has a complete device definition</div>
<div class="t" style="left:1585.4px;top:313.44px;font-size:12.7px;color:#d2d2d2;">and includes a device overlay. After you install this</div>
<div class="t" style="left:1585.4px;top:328.56px;font-size:12.7px;color:#d2d2d2;">package, the additional devices are immediately</div>
<div class="t" style="left:1585.4px;top:343.68px;font-size:12.7px;color:#d2d2d2;">available in the Device Simulator.</div>
<div class="t" style="left:1577.3px;top:382.27px;font-size:12.2px;color:#c4c4c4;font-weight:bold;">Dependencies</div>
<div class="a" style="left:1576px;top:399px;width:340px;height:48px;background:#232323;border-radius:3px"></div>
<div class="a" style="left:1577px;top:400px;width:338px;height:18.5px;background:#383838;border-radius:2px 2px 0 0"></div>
<div class="a" style="left:1577px;top:419px;width:338px;height:27px;background:#414141;border-radius:0 0 2px 2px"></div>
<div class="t" style="left:1587.4px;top:402.34px;font-size:12.6px;color:#c4c4c4;">Package name</div>
<div class="t" style="left:1806px;top:402.34px;font-size:12.6px;color:#c4c4c4;">Version</div>
<div class="t" style="left:1584.3px;top:426.04px;font-size:12.6px;color:#c4c4c4;">List is Empty</div>
<svg style="left:7px;top:657px;" width="12" height="12" viewBox="0 0 12 12"><path d="M6 0 V12 M0 6 H12" stroke="#c4c4c4" stroke-width="2"/></svg>
<svg style="left:23px;top:661px;" width="8" height="5.5" viewBox="0 0 8 5.5"><path d="M0 0 L8 0 L4.0 4.5Z" fill="#c4c4c4"/></svg>
<div class="a" style="left:573.5px;top:655px;width:318px;height:16px;background:#2a2a2a;border-radius:3px;border-top:1px solid #101010"></div>
<div class="a" style="left:873px;top:656px;width:17px;height:14px;background:#383838;border-radius:0 3px 3px 0"></div>
<svg style="left:577px;top:659px;" width="8" height="8" viewBox="0 0 8 8"><circle cx="3" cy="3" r="2.3" fill="none" stroke="#c4c4c4" stroke-width="1.2"/><path d="M4.8 4.8 L7.2 7.2" stroke="#c4c4c4" stroke-width="1.5"/></svg>
<svg style="left:875px;top:657px;" width="12" height="12" viewBox="0 0 12 12"><rect x="3.5" y="0.8" width="7.7" height="7.7" fill="none" stroke="#c4c4c4" stroke-width="1"/><rect x="0.7" y="7.5" width="4" height="4" fill="#383838" stroke="#c4c4c4" stroke-width="1"/><path d="M5.5 6.5 L9.5 2.5 M6.5 2.5 H9.5 V5.5" fill="none" stroke="#c4c4c4" stroke-width="1"/></svg>
<div class="a" style="left:893px;top:653px;width:1px;height:20px;background:#2e2e2e;"></div>
<div class="a" style="left:919px;top:653px;width:1px;height:20px;background:#2e2e2e;"></div>
<div class="a" style="left:945px;top:653px;width:1px;height:20px;background:#2e2e2e;"></div>
<div class="a" style="left:971px;top:653px;width:1px;height:20px;background:#2e2e2e;"></div>
<div class="a" style="left:997px;top:653px;width:1px;height:20px;background:#2e2e2e;"></div>
<svg style="left:899px;top:656px;" width="14" height="14" viewBox="0 0 14 14"><rect x="1" y="0.5" width="5" height="5" fill="#c4c4c4"/><circle cx="4" cy="9.5" r="3.5" fill="#c4c4c4"/><path d="M9.5 2 L13.5 9 H5.5Z" fill="#c4c4c4"/></svg>
<svg style="left:925px;top:657px;" width="13" height="12" viewBox="0 0 13 12"><path d="M0.5 7 L6.5 1 H12 V6.5 L6 12.5Z" fill="#c4c4c4"/><circle cx="9.3" cy="3.7" r="1.2" fill="#3c3c3c"/></svg>
<svg style="left:950px;top:656px;" width="14" height="14" viewBox="0 0 14 14"><circle cx="7" cy="7" r="6.5" fill="#c4c4c4"/><rect x="6" y="3" width="2" height="5.5" fill="#3c3c3c"/><rect x="6" y="9.5" width="2" height="2" fill="#3c3c3c"/></svg>
<svg style="left:977px;top:657px;" width="13" height="12" viewBox="0 0 13 12"><path d="M6.5 0.5 L8.2 4.3 L12.5 4.6 L9.2 7.4 L10.3 11.6 L6.5 9.3 L2.7 11.6 L3.8 7.4 L0.5 4.6 L4.8 4.3Z" fill="#9a9a9a"/></svg>
<svg style="left:1003px;top:656px;" width="14" height="13" viewBox="0 0 14 13"><path d="M1 6.5 Q7 -0.5 13 6.5 Q7 13.5 1 6.5Z" fill="none" stroke="#c4c4c4" stroke-width="1.2"/><path d="M2 12 L12.5 1" stroke="#c4c4c4" stroke-width="1.4"/></svg>
<div class="t" style="left:1017px;top:655.84px;font-size:12.6px;color:#c4c4c4;">21</div>
<svg style="left:4px;top:679px;" width="9" height="8" viewBox="0 0 9 8"><path d="M0 0 H9 L4.5 8Z" fill="#7c7c7c"/></svg>
<svg style="left:18px;top:677px;" width="13" height="12" viewBox="0 0 13 12"><path d="M6.5 0.5 L8.2 4.3 L12.5 4.6 L9.2 7.4 L10.3 11.6 L6.5 9.3 L2.7 11.6 L3.8 7.4 L0.5 4.6 L4.8 4.3Z" fill="#c4c4c4"/></svg>
<div class="t" style="left:35px;top:673.97px;font-size:12.2px;color:#c4c4c4;font-weight:bold;">Favorites</div>
<svg style="left:32px;top:692.0px;" width="12" height="12" viewBox="0 0 12 12"><circle cx="5" cy="5" r="4" fill="none" stroke="#c4c4c4" stroke-width="1.1"/><path d="M8 8 L11 11.2" stroke="#c4c4c4" stroke-width="1.4"/></svg>
<div class="t" style="left:48px;top:690.40px;font-size:12.4px;color:#c4c4c4;">All Materials</div>
<svg style="left:32px;top:708.0px;" width="12" height="12" viewBox="0 0 12 12"><circle cx="5" cy="5" r="4" fill="none" stroke="#c4c4c4" stroke-width="1.1"/><path d="M8 8 L11 11.2" stroke="#c4c4c4" stroke-width="1.4"/></svg>
<div class="t" style="left:48px;top:706.40px;font-size:12.4px;color:#c4c4c4;">All Models</div>
<svg style="left:32px;top:724.0px;" width="12" height="12" viewBox="0 0 12 12"><circle cx="5" cy="5" r="4" fill="none" stroke="#c4c4c4" stroke-width="1.1"/><path d="M8 8 L11 11.2" stroke="#c4c4c4" stroke-width="1.4"/></svg>
<div class="t" style="left:48px;top:722.40px;font-size:12.4px;color:#c4c4c4;">All Prefabs</div>
<div class="a" style="left:0px;top:753px;width:207px;height:16px;background:#4d4d4d;"></div>
<svg style="left:4px;top:757px;" width="9" height="8" viewBox="0 0 9 8"><path d="M0 0 H9 L4.5 8Z" fill="#7c7c7c"/></svg>
<svg style="left:18px;top:756px;" width="14" height="10" viewBox="0 0 14 10"><path d="M0.5 0.5 H4.5 L5.8 2 H11 V3.5 H3 L0.5 9.5Z" fill="#c4c4c4"/><path d="M3.5 4.5 H13.5 L11 10 H0.8Z" fill="#c4c4c4"/></svg>
<div class="t" style="left:35px;top:752.97px;font-size:12.2px;color:#c4c4c4;font-weight:bold;">Assets</div>
<svg style="left:32px;top:772px;" width="12" height="10" viewBox="0 0 12 10"><path d="M0 0.5 H4.5 L5.8 2 H12 V10 H0Z" fill="#c4c4c4"/></svg>
<div class="t" style="left:48px;top:768.90px;font-size:12.4px;color:#c4c4c4;">Scenes</div>
<svg style="left:5px;top:788px;" width="8" height="9" viewBox="0 0 8 9"><path d="M0 0 L8 4.5 L0 9Z" fill="#7c7c7c"/></svg>
<svg style="left:18px;top:788px;" width="12" height="10" viewBox="0 0 12 10"><path d="M0 0.5 H4.5 L5.8 2 H12 V10 H0Z" fill="#c4c4c4"/></svg>
<div class="t" style="left:35px;top:784.97px;font-size:12.2px;color:#c4c4c4;font-weight:bold;">Packages</div>
<div class="t" style="left:212px;top:676.47px;font-size:12.2px;color:#c4c4c4;font-weight:bold;">Assets</div>
<svg style="left:231px;top:717px;" width="48" height="40" viewBox="0 0 48 40"><path d="M3 0 H21 L25.5 8 H45 Q48 8 48 11 V37 Q48 40 45 40 H3 Q0 40 0 37 V3 Q0 0 3 0Z" fill="#c2c2c2"/></svg>
<div class="t" style="left:236px;top:768.80px;font-size:11.2px;color:#c4c4c4;">Scenes</div>
<div class="a" style="left:966px;top:1007px;width:55px;height:2px;background:#6a6a6a;"></div>
<svg style="left:993px;top:1003px;" width="10" height="10" viewBox="0 0 10 10"><circle cx="5" cy="5" r="5" fill="#a5a5a5"/></svg>
<div class="a" style="left:1078px;top:653px;width:1px;height:20px;background:#2e2e2e;"></div>
<div class="t" style="left:1043px;top:656.40px;font-size:12.4px;color:#c4c4c4;">Clear</div>
<div class="a" style="left:1080px;top:657px;width:1px;height:12px;background:#555555;"></div>
<svg style="left:1082px;top:661px;" width="8" height="5.5" viewBox="0 0 8 5.5"><path d="M0 0 L8 0 L4.0 4.5Z" fill="#c4c4c4"/></svg>
<div class="a" style="left:1095.5px;top:653px;width:58px;height:20px;background:#464646;"></div>
<div class="t" style="left:1099px;top:656.40px;font-size:12.4px;color:#c4c4c4;">Collapse</div>
<div class="a" style="left:1154px;top:653px;width:1px;height:20px;background:#2e2e2e;"></div>
<div class="t" style="left:1159px;top:656.40px;font-size:12.4px;color:#c4c4c4;">Error Pause</div>
<div class="a" style="left:1228px;top:653px;width:1px;height:20px;background:#2e2e2e;"></div>
<div class="t" style="left:1232px;top:656.40px;font-size:12.4px;color:#c4c4c4;">Editor</div>
<svg style="left:1266px;top:661px;" width="8" height="5.5" viewBox="0 0 8 5.5"><path d="M0 0 L8 0 L4.0 4.5Z" fill="#c4c4c4"/></svg>
<div class="a" style="left:1280.5px;top:655px;width:171px;height:16px;background:#2a2a2a;border-radius:3px;border-top:1px solid #101010"></div>
<svg style="left:1284px;top:659px;" width="8" height="8" viewBox="0 0 8 8"><circle cx="3" cy="3" r="2.3" fill="none" stroke="#c4c4c4" stroke-width="1.2"/><path d="M4.8 4.8 L7.2 7.2" stroke="#c4c4c4" stroke-width="1.5"/></svg>
<div class="a" style="left:1454.5px;top:653px;width:33px;height:20px;background:#464646;"></div>
<div class="a" style="left:1488.5px;top:653px;width:33px;height:20px;background:#464646;"></div>
<div class="a" style="left:1522.5px;top:653px;width:32.5px;height:20px;background:#464646;"></div>
<svg style="left:1459px;top:656px;" width="13" height="13" viewBox="0 0 13 13"><path d="M6.5 0.5 A6 6 0 1 1 2 10.5 L0.5 12.5 L1.8 9 A6 6 0 0 1 6.5 0.5Z" fill="#8a8a8a"/><rect x="5.7" y="3" width="1.8" height="4.6" fill="#464646"/><rect x="5.7" y="8.6" width="1.8" height="1.7" fill="#464646"/></svg>
<div class="t" style="left:1475.3px;top:656.40px;font-size:12.4px;color:#c4c4c4;">0</div>
<svg style="left:1493px;top:656px;" width="14" height="13" viewBox="0 0 14 13"><path d="M7 0.5 L13.5 12.5 H0.5Z" fill="#a8a8a8"/><rect x="6.2" y="4.2" width="1.6" height="4.6" fill="#464646"/><rect x="6.2" y="9.6" width="1.6" height="1.6" fill="#464646"/></svg>
<div class="t" style="left:1509.6px;top:656.40px;font-size:12.4px;color:#c4c4c4;">0</div>
<svg style="left:1525px;top:656px;" width="14" height="14" viewBox="0 0 14 14"><circle cx="7" cy="7" r="6.5" fill="#c4c4c4"/><rect x="6" y="3" width="2" height="5.5" fill="#464646"/><rect x="6" y="9.5" width="2" height="2" fill="#464646"/></svg>
<div class="t" style="left:1543.5px;top:656.40px;font-size:12.4px;color:#c4c4c4;">0</div>
<div class="a" style="left:1814px;top:1020px;width:1px;height:20px;background:#2a2a2a;"></div>
<div class="a" style="left:1840px;top:1020px;width:1px;height:20px;background:#2a2a2a;"></div>
<div class="a" style="left:1867px;top:1020px;width:1px;height:20px;background:#2a2a2a;"></div>
<div class="a" style="left:1893px;top:1020px;width:1px;height:20px;background:#2a2a2a;"></div>
<svg style="left:1820px;top:1023px;" width="15" height="15" viewBox="0 0 15 15"><path d="M3.5 4 H11.5 V9.5 A4 4 0 0 1 3.5 9.5Z" fill="#c8c8c8"/><path d="M5 3.5 A2.5 2.5 0 0 1 10 3.5Z" fill="#c8c8c8"/><path d="M1 5 L3.5 6.3 M14 5 L11.5 6.3 M0.5 9 H3.5 M14.5 9 H11.5 M1 13.5 L4 11.5 M14 13.5 L11 11.5 M4.5 1 L6 3 M10.5 1 L9 3" stroke="#c8c8c8" stroke-width="1.1"/><path d="M0.8 0.8 L14.2 14.2" stroke="#191919" stroke-width="2"/><path d="M1 1 L14 14" stroke="#c8c8c8" stroke-width="0.9"/></svg>
<svg style="left:1846px;top:1023px;" width="14" height="15" viewBox="0 0 14 15"><ellipse cx="7" cy="3" rx="6" ry="2.5" fill="#c8c8c8"/><path d="M1 5 Q7 9 13 5 V7.5 Q7 11.5 1 7.5Z M1 9.5 Q7 13.5 13 9.5 V11.5 Q7 15.5 1 11.5Z" fill="#c8c8c8"/><path d="M0.5 0.5 L13.5 14.5" stroke="#191919" stroke-width="2"/><path d="M0.8 0.8 L13.3 14.3" stroke="#c8c8c8" stroke-width="0.9"/></svg>
<svg style="left:1873px;top:1023px;" width="14" height="15" viewBox="0 0 14 15"><path d="M2 5 A5.5 5.5 0 0 1 11 2.5 M12 9 A5.5 5.5 0 0 1 3 12.5" fill="none" stroke="#c8c8c8" stroke-width="1.3"/><circle cx="7" cy="6.5" r="2.8" fill="#c8c8c8"/><rect x="5.8" y="9" width="2.4" height="2.5" fill="#c8c8c8"/><path d="M0.8 0.8 L13.3 14.3" stroke="#191919" stroke-width="2"/><path d="M1 1 L13 14" stroke="#c8c8c8" stroke-width="0.9"/></svg>
<svg style="left:1899px;top:1023px;" width="14" height="14" viewBox="0 0 14 14"><circle cx="7" cy="7" r="6.4" fill="none" stroke="#c8c8c8" stroke-width="1.1"/><path d="M4 7.2 L6.2 9.3 L10.2 5" fill="none" stroke="#c8c8c8" stroke-width="1.5"/></svg>
</body></html>
